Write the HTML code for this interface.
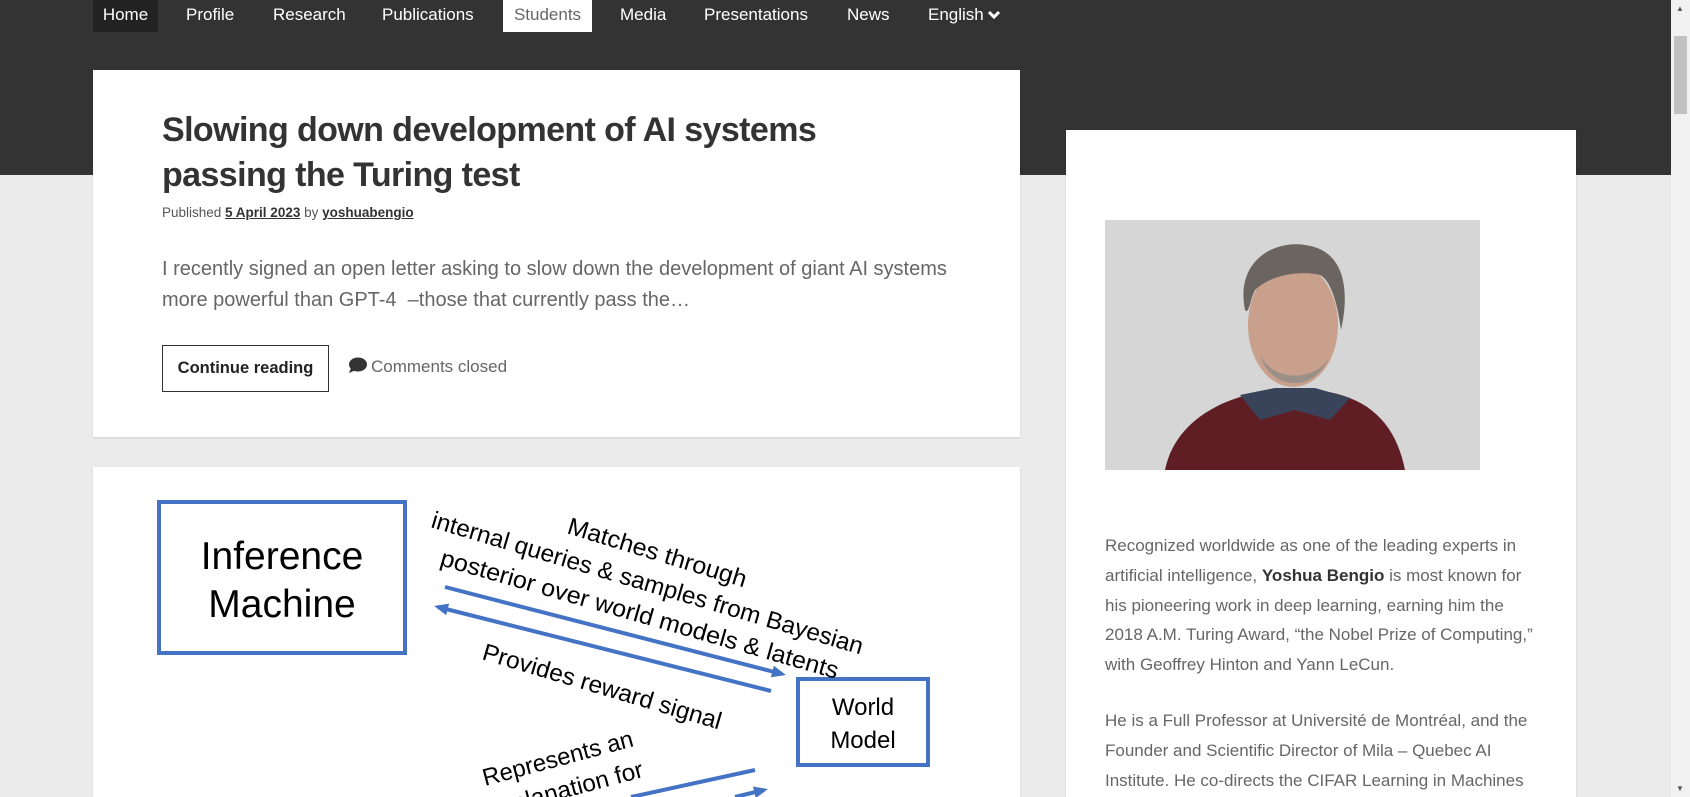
<!DOCTYPE html>
<html><head><meta charset="utf-8">
<style>
*{margin:0;padding:0;box-sizing:border-box}
html,body{width:1690px;height:797px;overflow:hidden;background:#ebebeb;font-family:"Liberation Sans",sans-serif}
#hdr{position:absolute;left:0;top:0;width:1671px;height:175px;background:#333}
.nav{position:absolute;top:0;height:32px;line-height:30px;font-size:17px;color:#fff}
.nav.home{background:#222;left:93px;width:65px;text-align:center}
.nav.stu{background:#fff;color:#666;left:503px;width:89px;text-align:center}
.card{position:absolute;background:#fff;box-shadow:0 1px 2px rgba(0,0,0,.12)}
h1{position:absolute;left:162px;top:108px;font-size:34px;line-height:45px;font-weight:bold;color:#333;letter-spacing:-0.6px}
.meta{position:absolute;left:162px;top:205px;font-size:13.5px;color:#555}
.meta b{color:#333;text-decoration:underline}
.exc{position:absolute;left:162px;top:254px;font-size:20px;line-height:31px;color:#666}
.btn{position:absolute;left:162px;top:345px;width:167px;height:47px;border:1px solid #333;font-weight:bold;font-size:16.5px;line-height:45px;text-align:center;color:#222}
.cc{position:absolute;left:348px;top:357px;font-size:17px;color:#666}
.side{position:absolute;left:1105px;font-size:17px;line-height:29.8px;color:#666;white-space:nowrap}
.side b{color:#333}
#sb{position:absolute;left:1671px;top:0;width:19px;height:797px;background:#f1f1f1}
</style></head><body>
<div id="hdr"></div>
<div class="nav home">Home</div>
<div class="nav" style="left:186px">Profile</div>
<div class="nav" style="left:273px">Research</div>
<div class="nav" style="left:382px">Publications</div>
<div class="nav stu">Students</div>
<div class="nav" style="left:620px">Media</div>
<div class="nav" style="left:704px">Presentations</div>
<div class="nav" style="left:847px">News</div>
<div class="nav" style="left:928px">English <svg width="12" height="10" style="vertical-align:0"><path d="M1,2L6,7L11,2" fill="none" stroke="#fff" stroke-width="3"/></svg></div>

<div class="card" style="left:93px;top:70px;width:927px;height:367px"></div>
<h1>Slowing down development of AI systems<br>passing the Turing test</h1>
<div class="meta">Published <b>5 April 2023</b> by <b>yoshuabengio</b></div>
<div class="exc">I recently signed an open letter asking to slow down the development of giant AI systems<br>more powerful than GPT-4 &nbsp;–those that currently pass the…</div>
<div class="btn">Continue reading</div>
<div class="cc"><svg width="20" height="17" style="vertical-align:-2px;margin-right:3px"><ellipse cx="10" cy="7.5" rx="9" ry="7" fill="#333"/><path d="M3,11L1,16L8,13z" fill="#333"/></svg>Comments closed</div>

<div class="card" style="left:93px;top:467px;width:927px;height:330px"></div>
<svg style="position:absolute;left:0;top:0" width="1690" height="797">
<defs><marker id="ah" markerWidth="14" markerHeight="12" refX="10" refY="6" orient="auto" markerUnits="userSpaceOnUse"><path d="M0,0L14,6L0,12z" fill="#4472c4"/></marker></defs>
<rect x="159" y="502" width="246" height="151" fill="none" stroke="#4472c4" stroke-width="4"/>
<text x="282" y="569" font-size="39" text-anchor="middle" font-family="Liberation Sans">Inference</text>
<text x="282" y="617" font-size="39" text-anchor="middle" font-family="Liberation Sans">Machine</text>
<rect x="798" y="679" width="130" height="86" fill="none" stroke="#4472c4" stroke-width="4"/>
<text x="863" y="715" font-size="24" text-anchor="middle" font-family="Liberation Sans">World</text>
<text x="863" y="748" font-size="24" text-anchor="middle" font-family="Liberation Sans">Model</text>
<g font-size="24" font-family="Liberation Sans" fill="#000">
<text transform="translate(566,533) rotate(17)" textLength="186" lengthAdjust="spacingAndGlyphs">Matches through</text>
<text transform="translate(430,527) rotate(16.5)" textLength="449" lengthAdjust="spacingAndGlyphs">internal queries &amp; samples from Bayesian</text>
<text transform="translate(439,565) rotate(16)" textLength="413" lengthAdjust="spacingAndGlyphs">posterior over world models &amp; latents</text>
<text transform="translate(481,659) rotate(16.5)" textLength="248" lengthAdjust="spacingAndGlyphs">Provides reward signal</text>
<text transform="translate(485,786) rotate(-15)" textLength="155" lengthAdjust="spacingAndGlyphs">Represents an</text>
<text transform="translate(490,818) rotate(-15)" textLength="160" lengthAdjust="spacingAndGlyphs">explanation for</text>
</g>
<g stroke="#4472c4" stroke-width="4">
<line x1="445" y1="587" x2="782" y2="674" marker-end="url(#ah)"/>
<line x1="771" y1="691" x2="438" y2="607" marker-end="url(#ah)"/>
<line x1="631" y1="797" x2="755" y2="770"/>
<line x1="735" y1="797" x2="764" y2="790" marker-end="url(#ah)"/>
</g>
</svg>

<div class="card" style="left:1066px;top:130px;width:510px;height:667px"></div>
<svg style="position:absolute;left:1105px;top:220px" width="375" height="250">
<rect width="375" height="250" fill="#d6d6d6"/>
<path d="M60,250 C70,200 120,175 170,170 L210,170 C260,175 290,200 300,250Z" fill="#5e1e24"/>
<path d="M135,175 L170,168 L210,168 L245,178 L225,200 L190,190 L155,200Z" fill="#39445a"/>
<ellipse cx="188" cy="105" rx="45" ry="62" fill="#c8a08c"/>
<path d="M140,90 C130,40 170,20 200,25 C240,30 245,70 236,110 C232,80 225,60 215,55 C195,50 165,55 150,70 C145,80 144,95 140,90Z" fill="#6a6560"/>
<path d="M155,135 C165,170 210,175 225,135 C215,160 170,165 155,135Z" fill="#9a9088"/>
</svg>
<div class="side" style="top:531px">Recognized worldwide as one of the leading experts in<br>artificial intelligence, <b>Yoshua Bengio</b> is most known for<br>his pioneering work in deep learning, earning him the<br>2018 A.M. Turing Award, “the Nobel Prize of Computing,”<br>with Geoffrey Hinton and Yann LeCun.</div>
<div class="side" style="top:706px">He is a Full Professor at Université de Montréal, and the<br>Founder and Scientific Director of Mila – Quebec AI<br>Institute. He co-directs the CIFAR Learning in Machines</div>

<div id="sb"><div style="position:absolute;left:3px;top:36px;width:13px;height:78px;background:#c1c1c1"></div>
<div style="position:absolute;left:5px;top:4px;font-size:8px;color:#555">▲</div>
<div style="position:absolute;left:5px;top:784px;font-size:8px;color:#555">▼</div></div>
</body></html>
